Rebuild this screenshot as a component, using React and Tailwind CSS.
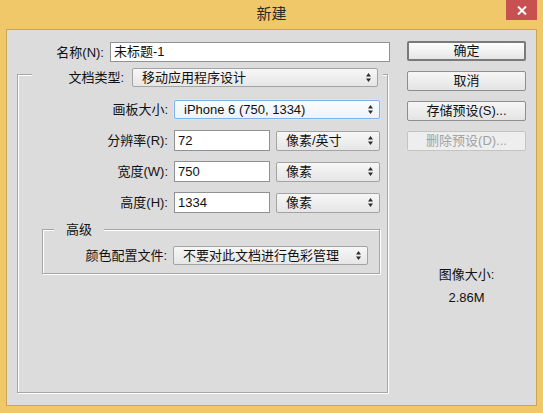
import React from "react";

const font = "font-[family-name:'Liberation_Sans','Noto_Sans_CJK_SC',sans-serif]";

// up/down arrows used by the combo boxes
function SpinArrows() {
  return (
    <svg width="5" height="9" viewBox="0 0 5 9" className="shrink-0">
      <path d="M2.5 0 L5 3.5 L0 3.5 Z" fill="#2b2b2b" />
      <path d="M0 5.5 L5 5.5 L2.5 9 Z" fill="#2b2b2b" />
    </svg>
  );
}

function Combo({ className = "", focus = false, children }) {
  return (
    <div
      className={`flex items-center justify-between rounded-[2px] border pl-[9px] pr-[6px] text-[13px] text-[#111] ${
        focus
          ? "border-[#7eb4ea] bg-gradient-to-b from-[#fafcff] to-[#eef3f8] shadow-[0_0_0_1px_#d3e5f8]"
          : "border-[#a3a3a3] bg-gradient-to-b from-[#f7f7f7] to-[#e6e6e6]"
      } ${className}`}
    >
      <span className="truncate">{children}</span>
      <SpinArrows />
    </div>
  );
}

function Field({ className = "", value }) {
  return (
    <div
      className={`flex items-center border border-[#8f9194] bg-white pl-[3px] text-[13px] text-[#111] ${className}`}
    >
      {value}
    </div>
  );
}

function Label({ className = "", children }) {
  return (
    <div className={`shrink-0 text-right text-[13px] leading-[17px] text-[#111] ${className}`}>
      {children}
    </div>
  );
}

function Button({ children, primary = false, disabled = false }) {
  let look = "border border-[#8e8e8e] bg-gradient-to-b from-[#f6f6f6] to-[#e4e4e4] text-[#111]";
  if (primary) look = "border-2 border-[#7a7a7a] bg-gradient-to-b from-[#fdfdfd] to-[#e6e6e6] text-[#111]";
  if (disabled) look = "border border-[#c4c4c4] bg-[#eeeeee] text-[#a2a2a2]";
  return (
    <div className={`flex h-[20px] w-[119px] items-center justify-center rounded-[2px] text-[13px] ${look}`}>
      {children}
    </div>
  );
}

export default function App() {
  return (
    <div className={`flex h-[413px] w-[543px] flex-col bg-[#f0c86a] ${font}`}>
      {/* title bar */}
      <div className="relative flex h-[29px] shrink-0 items-center justify-center">
        <span className="text-[15px] text-[#2a2a2a]">新建</span>
        <div className="absolute right-[6px] top-0 flex h-[20px] w-[31px] items-center justify-center bg-[#c75050]">
          <svg width="10" height="9" viewBox="0 0 10 9">
            <path d="M1 0.5 L9 8.5 M9 0.5 L1 8.5" stroke="#fff" strokeWidth="2" />
          </svg>
        </div>
      </div>

      {/* client area */}
      <div className="mx-[6px] flex h-[377px] border border-[#c9a557] bg-[#dcdcdc]">
        {/* left: form */}
        <div className="flex w-[383px] shrink-0 flex-col pl-[10px]">
          <div className="mt-[12px] flex h-[20px] items-center">
            <Label className="w-[87px]">名称(N):</Label>
            <Field className="ml-[6px] h-[20px] w-[280px]" value="未标题-1" />
          </div>

          <div className="mt-[12px] flex h-[319px] w-[371px] flex-col border border-[#a6a6a6] shadow-[inset_1px_1px_0_#fff,1px_1px_0_#fff]">
            <div className="-mt-[7px] ml-[14px] flex h-[19px] w-[351px] items-center bg-[#dcdcdc]">
              <Label className="w-[92px]">文档类型:</Label>
              <Combo className="ml-[8px] h-[19px] w-[246px]">移动应用程序设计</Combo>
            </div>

            <div className="ml-[1px] mt-[13px] flex flex-col gap-[10px]">
              <div className="flex h-[19px] items-center">
                <Label className="w-[149px]">画板大小:</Label>
                <Combo focus className="ml-[6px] h-[19px] w-[206px]">iPhone 6 (750, 1334)</Combo>
              </div>
              <div className="mt-[1px] flex h-[21px] items-center">
                <Label className="w-[149px]">分辨率(R):</Label>
                <Field className="ml-[6px] h-[21px] w-[96px]" value="72" />
                <Combo className="ml-[6px] h-[20px] w-[104px]">像素/英寸</Combo>
              </div>
              <div className="flex h-[21px] items-center">
                <Label className="w-[149px]">宽度(W):</Label>
                <Field className="ml-[6px] h-[21px] w-[96px]" value="750" />
                <Combo className="ml-[6px] h-[20px] w-[104px]">像素</Combo>
              </div>
              <div className="flex h-[21px] items-center">
                <Label className="w-[149px]">高度(H):</Label>
                <Field className="ml-[6px] h-[21px] w-[96px]" value="1334" />
                <Combo className="ml-[6px] h-[20px] w-[104px]">像素</Combo>
              </div>
            </div>

            {/* advanced */}
            <div className="ml-[24px] mt-[16px] flex h-[45px] w-[338px] flex-col border border-[#a6a6a6] shadow-[inset_1px_1px_0_#fff,1px_1px_0_#fff]">
              <span className="-mt-[9px] ml-[11px] h-[17px] self-start bg-[#dcdcdc] px-[12px] text-[13px] leading-[17px] text-[#111]">
                高级
              </span>
              <div className="mt-[8px] flex h-[19px] items-center">
                <Label className="w-[124px]">颜色配置文件:</Label>
                <Combo className="ml-[6px] h-[19px] w-[195px]">不要对此文档进行色彩管理</Combo>
              </div>
            </div>
          </div>
        </div>

        {/* right: buttons */}
        <div className="ml-[17px] flex w-[119px] flex-col">
          <div className="mt-[11px] flex flex-col gap-[10px]">
            <Button primary>确定</Button>
            <Button>取消</Button>
            <Button>存储预设(S)...</Button>
            <Button disabled>删除预设(D)...</Button>
          </div>
          <div className="mt-[115px] text-center text-[13px] leading-[17px] text-[#111]">图像大小:</div>
          <div className="mt-[6px] text-center text-[13px] leading-[17px] text-[#111]">2.86M</div>
        </div>
      </div>
    </div>
  );
}
